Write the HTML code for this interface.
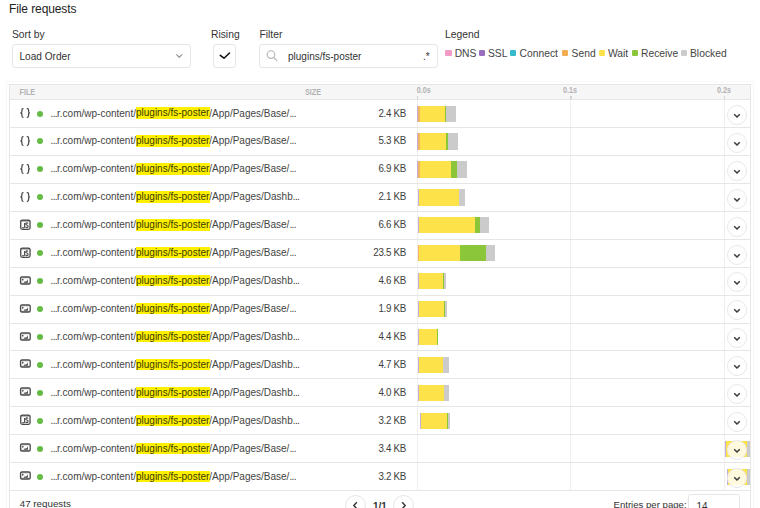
<!DOCTYPE html>
<html><head><meta charset="utf-8">
<style>
*{box-sizing:border-box;margin:0;padding:0}
html,body{width:760px;height:508px;overflow:hidden;background:#fff}
body{position:relative;font-family:"Liberation Sans",sans-serif;color:#333}
.abs{position:absolute;white-space:nowrap}
.title{left:9px;top:0.6px;font-size:12px;line-height:16px;color:#222;letter-spacing:-0.1px}
.lbl{font-size:10.3px;line-height:14px;color:#333}
.box{position:absolute;border:1px solid #e6e6e6;border-radius:3px;background:#fff}
.table{position:absolute;left:9px;top:84px;width:742px;height:430px;border:1px solid #e6e6e6;background:#fff;outline:1px solid #f8f8f8;outline-offset:2px}
.thead{position:absolute;left:10px;top:85px;width:740px;height:15px;background:#f6f6f6;border-bottom:1px solid #e4e4e4}
.th{position:absolute;font-size:7.2px;line-height:8px;font-weight:bold;color:#b2b2b2;top:86px;transform:scaleY(1.17);transform-origin:0 0}
.tick{position:absolute;width:1px;height:3px;top:96px;background:#d2d2d2}
.vline{position:absolute;top:99px;height:392px;width:1px;background:#efefef}
.row{position:absolute;left:10px;width:740px;height:1px;background:#e6e6e6}
.icw{position:absolute;left:18px;width:15px;height:15px}
.icw svg{display:block}
.br{font-size:10px;line-height:14px;color:#444;letter-spacing:1px}
.dot{position:absolute;left:37px;width:6px;height:6px;border-radius:50%;background:#66bb44}
.url{position:absolute;left:50.5px;font-size:10px;line-height:14px;color:#444;white-space:nowrap}
.el{letter-spacing:-0.6px}
.hl{background:#fff000;color:#3a3a00;padding-top:0.2px;padding-bottom:0.3px;padding-right:0.7px;margin-right:-0.7px}
.size{position:absolute;right:354px;font-size:9.8px;line-height:14px;color:#3d3d3d;white-space:nowrap;letter-spacing:-0.3px;transform:scaleY(1.08);transform-origin:0 10.5px}
.seg{position:absolute;height:16.2px}
.btn{position:absolute;left:726.5px;width:20px;height:20px;padding-top:2px;border-radius:50%;border:1px solid #e8e8e8;background:rgba(255,255,255,.82);display:flex;align-items:center;justify-content:center}
.lsq{position:absolute;top:49.6px;width:6.4px;height:6.4px;border-radius:1.2px}
.ltx{position:absolute;top:46.6px;font-size:10.3px;line-height:14px;color:#444;white-space:nowrap}
.legsq{display:inline-block;width:6px;height:6px;border-radius:1px;margin-right:3px;vertical-align:0px}
.leg{position:absolute;left:445px;top:46.6px;font-size:10.3px;line-height:14px;color:#444;white-space:nowrap}
.leg span.t{margin-right:4px}
.pg{position:absolute;width:21px;height:21px;border-radius:50%;border:1px solid #e4e4e4;background:#fff;display:flex;align-items:center;justify-content:center}
</style></head><body>
<div class="abs title">File requests</div>
<div class="abs lbl" style="left:12px;top:27.7px">Sort by</div>
<div class="abs lbl" style="left:211px;top:27.7px">Rising</div>
<div class="abs lbl" style="left:259.5px;top:27.7px">Filter</div>
<div class="abs lbl" style="left:445px;top:28px">Legend</div>

<div class="box" style="left:12px;top:44px;width:179px;height:24px"></div>
<div class="abs" style="left:19.5px;top:50px;font-size:10.1px;line-height:14px;color:#333">Load Order</div>
<svg class="abs" style="left:175px;top:52px" width="9" height="7" viewBox="0 0 9 7"><path d="M1.3 2.4 L4.25 5.3 L7.2 2.4" fill="none" stroke="#9a9a9a" stroke-width="1.25"/></svg>

<div class="box" style="left:213px;top:44px;width:23px;height:24px"></div>
<svg class="abs" style="left:218px;top:50px" width="14" height="11" viewBox="0 0 14 11"><path d="M2.3 5.3 L6 8.2 L11.5 3" fill="none" stroke="#111" stroke-width="1.55" stroke-linecap="round" stroke-linejoin="round"/></svg>

<div class="box" style="left:259px;top:44px;width:179px;height:24px"></div>
<svg class="abs" style="left:265px;top:49px" width="14" height="13" viewBox="0 0 14 13"><circle cx="6" cy="5.6" r="3.8" fill="none" stroke="#b4b4b4" stroke-width="1.1"/><path d="M8.8 8.4 L12.2 11.8" stroke="#b4b4b4" stroke-width="1.2"/></svg>
<div class="abs" style="left:288px;top:49.8px;font-size:10px;line-height:14px;color:#333">plugins/fs-poster</div>
<div class="abs" style="left:423px;top:49.8px;font-size:10px;line-height:14px;color:#333">.*</div>

<div class="lsq" style="left:445.3px;background:#f29ac6"></div><div class="ltx" style="left:454.7px">DNS</div>
<div class="lsq" style="left:478.5px;background:#9a6fc0"></div><div class="ltx" style="left:488px">SSL</div>
<div class="lsq" style="left:509.5px;background:#35bccb"></div><div class="ltx" style="left:519.6px">Connect</div>
<div class="lsq" style="left:562.1px;background:#f2ad52"></div><div class="ltx" style="left:571.6px">Send</div>
<div class="lsq" style="left:598.8px;background:#fde249"></div><div class="ltx" style="left:607.9px">Wait</div>
<div class="lsq" style="left:632.1px;background:#8bc53a"></div><div class="ltx" style="left:641px">Receive</div>
<div class="lsq" style="left:680.5px;background:#cbcbcb"></div><div class="ltx" style="left:690px">Blocked</div>

<div class="table"></div>
<div class="thead"></div>
<div class="th" style="left:19.5px;top:87.8px">FILE</div>
<div class="th" style="left:305px;top:87.8px">SIZE</div>
<div class="th" style="left:416.8px">0.0s</div>
<div class="th" style="left:563px">0.1s</div>
<div class="th" style="left:717px">0.2s</div>
<div class="tick" style="left:417px"></div>
<div class="tick" style="left:570.3px;width:1.4px"></div>
<div class="tick" style="left:724px"></div>
<div class="vline" style="left:417px"></div>
<div class="vline" style="left:570px"></div>
<div class="vline" style="left:724px"></div>

<div class="row" style="top:99px"></div>
<div class="icw" style="top:106.00px"><svg width="15" height="15" viewBox="0 0 15 15" fill="none" stroke="#4a4a4a" stroke-width="1.25" stroke-linecap="round"><path d="M5 2.7 C3.9 2.7 3.9 3.4 3.9 4.3 L3.9 5.7 C3.9 6.5 3.3 6.9 2.3 6.9 C3.3 6.9 3.9 7.3 3.9 8.1 L3.9 9.6 C3.9 10.5 3.9 11.3 5 11.3"/><path d="M9.2 2.7 C10.3 2.7 10.6 3.4 10.6 4.3 L10.6 5.7 C10.6 6.5 11.1 6.9 11.9 6.9 C11.1 6.9 10.6 7.3 10.6 8.1 L10.6 9.6 C10.6 10.5 10.3 11.3 9.2 11.3"/></svg></div>
<div class="dot" style="top:110.50px"></div>
<div class="url" style="top:106.50px"><span class="el">...</span>r.com/wp-content/<span class="hl">plugins/fs-poster</span>/App/Pages/Base/<span class=el>...</span></div>
<div class="size" style="top:106.50px">2.4 KB</div>
<div class="seg" style="top:105.50px;left:417px;width:39.00px;background:#c3addf"></div>
<div class="seg" style="top:105.50px;left:417.7px;width:38.30px;background:#f3b664"></div>
<div class="seg" style="top:105.50px;left:419.8px;width:36.20px;background:#fde249"></div>
<div class="seg" style="top:105.50px;left:445.3px;width:10.70px;background:#8bc53a"></div>
<div class="seg" style="top:105.50px;left:446.3px;width:9.70px;background:#cbcbcb"></div>
<div class="btn" style="top:104.80px"><svg width="8" height="6" viewBox="0 0 8 6"><path d="M1.2 1.3 L4 4.0 L6.8 1.3" fill="none" stroke="#3a3a3a" stroke-width="1.5"/></svg></div>
<div class="row" style="top:127px"></div>
<div class="icw" style="top:133.94px"><svg width="15" height="15" viewBox="0 0 15 15" fill="none" stroke="#4a4a4a" stroke-width="1.25" stroke-linecap="round"><path d="M5 2.7 C3.9 2.7 3.9 3.4 3.9 4.3 L3.9 5.7 C3.9 6.5 3.3 6.9 2.3 6.9 C3.3 6.9 3.9 7.3 3.9 8.1 L3.9 9.6 C3.9 10.5 3.9 11.3 5 11.3"/><path d="M9.2 2.7 C10.3 2.7 10.6 3.4 10.6 4.3 L10.6 5.7 C10.6 6.5 11.1 6.9 11.9 6.9 C11.1 6.9 10.6 7.3 10.6 8.1 L10.6 9.6 C10.6 10.5 10.3 11.3 9.2 11.3"/></svg></div>
<div class="dot" style="top:138.44px"></div>
<div class="url" style="top:134.44px"><span class="el">...</span>r.com/wp-content/<span class="hl">plugins/fs-poster</span>/App/Pages/Base/<span class=el>...</span></div>
<div class="size" style="top:134.44px">5.3 KB</div>
<div class="seg" style="top:133.44px;left:417px;width:41.00px;background:#c3addf"></div>
<div class="seg" style="top:133.44px;left:417.7px;width:40.30px;background:#f3b664"></div>
<div class="seg" style="top:133.44px;left:419.8px;width:38.20px;background:#fde249"></div>
<div class="seg" style="top:133.44px;left:446px;width:12.00px;background:#8bc53a"></div>
<div class="seg" style="top:133.44px;left:447.9px;width:10.10px;background:#cbcbcb"></div>
<div class="btn" style="top:132.74px"><svg width="8" height="6" viewBox="0 0 8 6"><path d="M1.2 1.3 L4 4.0 L6.8 1.3" fill="none" stroke="#3a3a3a" stroke-width="1.5"/></svg></div>
<div class="row" style="top:155px"></div>
<div class="icw" style="top:161.88px"><svg width="15" height="15" viewBox="0 0 15 15" fill="none" stroke="#4a4a4a" stroke-width="1.25" stroke-linecap="round"><path d="M5 2.7 C3.9 2.7 3.9 3.4 3.9 4.3 L3.9 5.7 C3.9 6.5 3.3 6.9 2.3 6.9 C3.3 6.9 3.9 7.3 3.9 8.1 L3.9 9.6 C3.9 10.5 3.9 11.3 5 11.3"/><path d="M9.2 2.7 C10.3 2.7 10.6 3.4 10.6 4.3 L10.6 5.7 C10.6 6.5 11.1 6.9 11.9 6.9 C11.1 6.9 10.6 7.3 10.6 8.1 L10.6 9.6 C10.6 10.5 10.3 11.3 9.2 11.3"/></svg></div>
<div class="dot" style="top:166.38px"></div>
<div class="url" style="top:162.38px"><span class="el">...</span>r.com/wp-content/<span class="hl">plugins/fs-poster</span>/App/Pages/Base/<span class=el>...</span></div>
<div class="size" style="top:162.38px">6.9 KB</div>
<div class="seg" style="top:161.38px;left:417px;width:50.00px;background:#c3addf"></div>
<div class="seg" style="top:161.38px;left:417.7px;width:49.30px;background:#f3b664"></div>
<div class="seg" style="top:161.38px;left:419.8px;width:47.20px;background:#fde249"></div>
<div class="seg" style="top:161.38px;left:451.4px;width:15.60px;background:#8bc53a"></div>
<div class="seg" style="top:161.38px;left:457px;width:10.00px;background:#cbcbcb"></div>
<div class="btn" style="top:160.68px"><svg width="8" height="6" viewBox="0 0 8 6"><path d="M1.2 1.3 L4 4.0 L6.8 1.3" fill="none" stroke="#3a3a3a" stroke-width="1.5"/></svg></div>
<div class="row" style="top:183px"></div>
<div class="icw" style="top:189.82px"><svg width="15" height="15" viewBox="0 0 15 15" fill="none" stroke="#4a4a4a" stroke-width="1.25" stroke-linecap="round"><path d="M5 2.7 C3.9 2.7 3.9 3.4 3.9 4.3 L3.9 5.7 C3.9 6.5 3.3 6.9 2.3 6.9 C3.3 6.9 3.9 7.3 3.9 8.1 L3.9 9.6 C3.9 10.5 3.9 11.3 5 11.3"/><path d="M9.2 2.7 C10.3 2.7 10.6 3.4 10.6 4.3 L10.6 5.7 C10.6 6.5 11.1 6.9 11.9 6.9 C11.1 6.9 10.6 7.3 10.6 8.1 L10.6 9.6 C10.6 10.5 10.3 11.3 9.2 11.3"/></svg></div>
<div class="dot" style="top:194.32px"></div>
<div class="url" style="top:190.32px"><span class="el">...</span>r.com/wp-content/<span class="hl">plugins/fs-poster</span>/App/Pages/Dashb<span class=el>...</span></div>
<div class="size" style="top:190.32px">2.1 KB</div>
<div class="seg" style="top:189.32px;left:417.6px;width:47.40px;background:#c3addf"></div>
<div class="seg" style="top:189.32px;left:418.6px;width:46.40px;background:#fde249"></div>
<div class="seg" style="top:189.32px;left:458.5px;width:6.50px;background:#8bc53a"></div>
<div class="seg" style="top:189.32px;left:459px;width:6.00px;background:#cbcbcb"></div>
<div class="btn" style="top:188.62px"><svg width="8" height="6" viewBox="0 0 8 6"><path d="M1.2 1.3 L4 4.0 L6.8 1.3" fill="none" stroke="#3a3a3a" stroke-width="1.5"/></svg></div>
<div class="row" style="top:211px"></div>
<div class="icw" style="top:217.76px"><svg width="15" height="15" viewBox="0 0 15 15" fill="none" stroke="#4a4a4a"><rect x="2.72" y="2.09" width="9.33" height="9.2" rx="1.5" stroke-width="1.3"/><path d="M2.8 2.9 H12" stroke-width="1"/><path d="M6.6 5.0 L6.6 8.5 C6.6 9.5 6.1 9.9 5.3 9.9 C4.8 9.9 4.5 9.7 4.3 9.4" stroke-width="1.1"/><path d="M10 5.5 C9.8 5.0 9.4 4.9 8.9 4.9 C8.2 4.9 7.7 5.2 7.7 5.9 C7.7 6.5 8.2 6.8 8.9 7.0 C9.6 7.2 10.1 7.5 10.1 8.3 C10.1 9.1 9.5 9.6 8.8 9.6 C8.2 9.6 7.7 9.3 7.5 8.8" stroke-width="1.15"/></svg></div>
<div class="dot" style="top:222.26px"></div>
<div class="url" style="top:218.26px"><span class="el">...</span>r.com/wp-content/<span class="hl">plugins/fs-poster</span>/App/Pages/Base/<span class=el>...</span></div>
<div class="size" style="top:218.26px">6.6 KB</div>
<div class="seg" style="top:217.26px;left:417.6px;width:71.40px;background:#c3addf"></div>
<div class="seg" style="top:217.26px;left:418.6px;width:70.40px;background:#fde249"></div>
<div class="seg" style="top:217.26px;left:475px;width:14.00px;background:#8bc53a"></div>
<div class="seg" style="top:217.26px;left:479.8px;width:9.20px;background:#cbcbcb"></div>
<div class="btn" style="top:216.56px"><svg width="8" height="6" viewBox="0 0 8 6"><path d="M1.2 1.3 L4 4.0 L6.8 1.3" fill="none" stroke="#3a3a3a" stroke-width="1.5"/></svg></div>
<div class="row" style="top:239px"></div>
<div class="icw" style="top:245.70px"><svg width="15" height="15" viewBox="0 0 15 15" fill="none" stroke="#4a4a4a"><rect x="2.72" y="2.09" width="9.33" height="9.2" rx="1.5" stroke-width="1.3"/><path d="M2.8 2.9 H12" stroke-width="1"/><path d="M6.6 5.0 L6.6 8.5 C6.6 9.5 6.1 9.9 5.3 9.9 C4.8 9.9 4.5 9.7 4.3 9.4" stroke-width="1.1"/><path d="M10 5.5 C9.8 5.0 9.4 4.9 8.9 4.9 C8.2 4.9 7.7 5.2 7.7 5.9 C7.7 6.5 8.2 6.8 8.9 7.0 C9.6 7.2 10.1 7.5 10.1 8.3 C10.1 9.1 9.5 9.6 8.8 9.6 C8.2 9.6 7.7 9.3 7.5 8.8" stroke-width="1.15"/></svg></div>
<div class="dot" style="top:250.20px"></div>
<div class="url" style="top:246.20px"><span class="el">...</span>r.com/wp-content/<span class="hl">plugins/fs-poster</span>/App/Pages/Base/<span class=el>...</span></div>
<div class="size" style="top:246.20px">23.5 KB</div>
<div class="seg" style="top:245.20px;left:417.6px;width:77.40px;background:#c3addf"></div>
<div class="seg" style="top:245.20px;left:418.4px;width:76.60px;background:#f3b664"></div>
<div class="seg" style="top:245.20px;left:419.4px;width:75.60px;background:#fde249"></div>
<div class="seg" style="top:245.20px;left:460.4px;width:34.60px;background:#8bc53a"></div>
<div class="seg" style="top:245.20px;left:485.6px;width:9.40px;background:#cbcbcb"></div>
<div class="btn" style="top:244.50px"><svg width="8" height="6" viewBox="0 0 8 6"><path d="M1.2 1.3 L4 4.0 L6.8 1.3" fill="none" stroke="#3a3a3a" stroke-width="1.5"/></svg></div>
<div class="row" style="top:267px"></div>
<div class="icw" style="top:273.64px"><svg width="15" height="15" viewBox="0 0 15 15" stroke="#4a4a4a"><rect x="2.55" y="2.95" width="9.65" height="7.15" rx="1.4" stroke-width="1.3" fill="none"/><path d="M2.8 3.7 H12 M2.8 9.4 H12" stroke-width="0.7"/><circle cx="4.7" cy="5.7" r="0.9" fill="#4a4a4a" stroke="none"/><path d="M4.4 6.2 L3.4 8.8" stroke-width="0.5" stroke="#999"/><path d="M5.6 8.7 L6.4 7.5 L8.0 7.6 L9.3 6.6 L9.5 5.4 L9.9 5.4 L9.9 8.7 Z" fill="#4a4a4a" stroke="none"/></svg></div>
<div class="dot" style="top:278.14px"></div>
<div class="url" style="top:274.14px"><span class="el">...</span>r.com/wp-content/<span class="hl">plugins/fs-poster</span>/App/Pages/Dashb<span class=el>...</span></div>
<div class="size" style="top:274.14px">4.6 KB</div>
<div class="seg" style="top:273.14px;left:417.8px;width:28.20px;background:#c3addf"></div>
<div class="seg" style="top:273.14px;left:418.8px;width:27.20px;background:#fde249"></div>
<div class="seg" style="top:273.14px;left:442.7px;width:3.30px;background:#8bc53a"></div>
<div class="seg" style="top:273.14px;left:443.5px;width:2.50px;background:#cbcbcb"></div>
<div class="btn" style="top:272.44px"><svg width="8" height="6" viewBox="0 0 8 6"><path d="M1.2 1.3 L4 4.0 L6.8 1.3" fill="none" stroke="#3a3a3a" stroke-width="1.5"/></svg></div>
<div class="row" style="top:295px"></div>
<div class="icw" style="top:301.58px"><svg width="15" height="15" viewBox="0 0 15 15" stroke="#4a4a4a"><rect x="2.55" y="2.95" width="9.65" height="7.15" rx="1.4" stroke-width="1.3" fill="none"/><path d="M2.8 3.7 H12 M2.8 9.4 H12" stroke-width="0.7"/><circle cx="4.7" cy="5.7" r="0.9" fill="#4a4a4a" stroke="none"/><path d="M4.4 6.2 L3.4 8.8" stroke-width="0.5" stroke="#999"/><path d="M5.6 8.7 L6.4 7.5 L8.0 7.6 L9.3 6.6 L9.5 5.4 L9.9 5.4 L9.9 8.7 Z" fill="#4a4a4a" stroke="none"/></svg></div>
<div class="dot" style="top:306.08px"></div>
<div class="url" style="top:302.08px"><span class="el">...</span>r.com/wp-content/<span class="hl">plugins/fs-poster</span>/App/Pages/Base/<span class=el>...</span></div>
<div class="size" style="top:302.08px">1.9 KB</div>
<div class="seg" style="top:301.08px;left:417.8px;width:29.20px;background:#c3addf"></div>
<div class="seg" style="top:301.08px;left:418.8px;width:28.20px;background:#fde249"></div>
<div class="seg" style="top:301.08px;left:444.3px;width:2.70px;background:#8bc53a"></div>
<div class="seg" style="top:301.08px;left:445px;width:2.00px;background:#cbcbcb"></div>
<div class="btn" style="top:300.38px"><svg width="8" height="6" viewBox="0 0 8 6"><path d="M1.2 1.3 L4 4.0 L6.8 1.3" fill="none" stroke="#3a3a3a" stroke-width="1.5"/></svg></div>
<div class="row" style="top:323px"></div>
<div class="icw" style="top:329.52px"><svg width="15" height="15" viewBox="0 0 15 15" stroke="#4a4a4a"><rect x="2.55" y="2.95" width="9.65" height="7.15" rx="1.4" stroke-width="1.3" fill="none"/><path d="M2.8 3.7 H12 M2.8 9.4 H12" stroke-width="0.7"/><circle cx="4.7" cy="5.7" r="0.9" fill="#4a4a4a" stroke="none"/><path d="M4.4 6.2 L3.4 8.8" stroke-width="0.5" stroke="#999"/><path d="M5.6 8.7 L6.4 7.5 L8.0 7.6 L9.3 6.6 L9.5 5.4 L9.9 5.4 L9.9 8.7 Z" fill="#4a4a4a" stroke="none"/></svg></div>
<div class="dot" style="top:334.02px"></div>
<div class="url" style="top:330.02px"><span class="el">...</span>r.com/wp-content/<span class="hl">plugins/fs-poster</span>/App/Pages/Dashb<span class=el>...</span></div>
<div class="size" style="top:330.02px">4.4 KB</div>
<div class="seg" style="top:329.02px;left:417.8px;width:20.20px;background:#c3addf"></div>
<div class="seg" style="top:329.02px;left:418.8px;width:19.20px;background:#fde249"></div>
<div class="seg" style="top:329.02px;left:437.4px;width:0.60px;background:#8bc53a"></div>
<div class="btn" style="top:328.32px"><svg width="8" height="6" viewBox="0 0 8 6"><path d="M1.2 1.3 L4 4.0 L6.8 1.3" fill="none" stroke="#3a3a3a" stroke-width="1.5"/></svg></div>
<div class="row" style="top:350px"></div>
<div class="icw" style="top:357.46px"><svg width="15" height="15" viewBox="0 0 15 15" stroke="#4a4a4a"><rect x="2.55" y="2.95" width="9.65" height="7.15" rx="1.4" stroke-width="1.3" fill="none"/><path d="M2.8 3.7 H12 M2.8 9.4 H12" stroke-width="0.7"/><circle cx="4.7" cy="5.7" r="0.9" fill="#4a4a4a" stroke="none"/><path d="M4.4 6.2 L3.4 8.8" stroke-width="0.5" stroke="#999"/><path d="M5.6 8.7 L6.4 7.5 L8.0 7.6 L9.3 6.6 L9.5 5.4 L9.9 5.4 L9.9 8.7 Z" fill="#4a4a4a" stroke="none"/></svg></div>
<div class="dot" style="top:361.96px"></div>
<div class="url" style="top:357.96px"><span class="el">...</span>r.com/wp-content/<span class="hl">plugins/fs-poster</span>/App/Pages/Dashb<span class=el>...</span></div>
<div class="size" style="top:357.96px">4.7 KB</div>
<div class="seg" style="top:356.96px;left:417.8px;width:31.20px;background:#c3addf"></div>
<div class="seg" style="top:356.96px;left:418.8px;width:30.20px;background:#fde249"></div>
<div class="seg" style="top:356.96px;left:442.8px;width:6.20px;background:#8bc53a"></div>
<div class="seg" style="top:356.96px;left:443.4px;width:5.60px;background:#cbcbcb"></div>
<div class="btn" style="top:356.26px"><svg width="8" height="6" viewBox="0 0 8 6"><path d="M1.2 1.3 L4 4.0 L6.8 1.3" fill="none" stroke="#3a3a3a" stroke-width="1.5"/></svg></div>
<div class="row" style="top:378px"></div>
<div class="icw" style="top:385.40px"><svg width="15" height="15" viewBox="0 0 15 15" stroke="#4a4a4a"><rect x="2.55" y="2.95" width="9.65" height="7.15" rx="1.4" stroke-width="1.3" fill="none"/><path d="M2.8 3.7 H12 M2.8 9.4 H12" stroke-width="0.7"/><circle cx="4.7" cy="5.7" r="0.9" fill="#4a4a4a" stroke="none"/><path d="M4.4 6.2 L3.4 8.8" stroke-width="0.5" stroke="#999"/><path d="M5.6 8.7 L6.4 7.5 L8.0 7.6 L9.3 6.6 L9.5 5.4 L9.9 5.4 L9.9 8.7 Z" fill="#4a4a4a" stroke="none"/></svg></div>
<div class="dot" style="top:389.90px"></div>
<div class="url" style="top:385.90px"><span class="el">...</span>r.com/wp-content/<span class="hl">plugins/fs-poster</span>/App/Pages/Dashb<span class=el>...</span></div>
<div class="size" style="top:385.90px">4.0 KB</div>
<div class="seg" style="top:384.90px;left:417.8px;width:31.20px;background:#c3addf"></div>
<div class="seg" style="top:384.90px;left:418.8px;width:30.20px;background:#fde249"></div>
<div class="seg" style="top:384.90px;left:444.1px;width:4.90px;background:#cbcbcb"></div>
<div class="btn" style="top:384.20px"><svg width="8" height="6" viewBox="0 0 8 6"><path d="M1.2 1.3 L4 4.0 L6.8 1.3" fill="none" stroke="#3a3a3a" stroke-width="1.5"/></svg></div>
<div class="row" style="top:406px"></div>
<div class="icw" style="top:413.34px"><svg width="15" height="15" viewBox="0 0 15 15" fill="none" stroke="#4a4a4a"><rect x="2.72" y="2.09" width="9.33" height="9.2" rx="1.5" stroke-width="1.3"/><path d="M2.8 2.9 H12" stroke-width="1"/><path d="M6.6 5.0 L6.6 8.5 C6.6 9.5 6.1 9.9 5.3 9.9 C4.8 9.9 4.5 9.7 4.3 9.4" stroke-width="1.1"/><path d="M10 5.5 C9.8 5.0 9.4 4.9 8.9 4.9 C8.2 4.9 7.7 5.2 7.7 5.9 C7.7 6.5 8.2 6.8 8.9 7.0 C9.6 7.2 10.1 7.5 10.1 8.3 C10.1 9.1 9.5 9.6 8.8 9.6 C8.2 9.6 7.7 9.3 7.5 8.8" stroke-width="1.15"/></svg></div>
<div class="dot" style="top:417.84px"></div>
<div class="url" style="top:413.84px"><span class="el">...</span>r.com/wp-content/<span class="hl">plugins/fs-poster</span>/App/Pages/Dashb<span class=el>...</span></div>
<div class="size" style="top:413.84px">3.2 KB</div>
<div class="seg" style="top:412.84px;left:419.8px;width:30.20px;background:#c3addf"></div>
<div class="seg" style="top:412.84px;left:420.8px;width:29.20px;background:#fde249"></div>
<div class="seg" style="top:412.84px;left:446.6px;width:3.40px;background:#8bc53a"></div>
<div class="seg" style="top:412.84px;left:447.5px;width:2.50px;background:#cbcbcb"></div>
<div class="btn" style="top:412.14px"><svg width="8" height="6" viewBox="0 0 8 6"><path d="M1.2 1.3 L4 4.0 L6.8 1.3" fill="none" stroke="#3a3a3a" stroke-width="1.5"/></svg></div>
<div class="row" style="top:434px"></div>
<div class="icw" style="top:441.28px"><svg width="15" height="15" viewBox="0 0 15 15" stroke="#4a4a4a"><rect x="2.55" y="2.95" width="9.65" height="7.15" rx="1.4" stroke-width="1.3" fill="none"/><path d="M2.8 3.7 H12 M2.8 9.4 H12" stroke-width="0.7"/><circle cx="4.7" cy="5.7" r="0.9" fill="#4a4a4a" stroke="none"/><path d="M4.4 6.2 L3.4 8.8" stroke-width="0.5" stroke="#999"/><path d="M5.6 8.7 L6.4 7.5 L8.0 7.6 L9.3 6.6 L9.5 5.4 L9.9 5.4 L9.9 8.7 Z" fill="#4a4a4a" stroke="none"/></svg></div>
<div class="dot" style="top:445.78px"></div>
<div class="url" style="top:441.78px"><span class="el">...</span>r.com/wp-content/<span class="hl">plugins/fs-poster</span>/App/Pages/Base/<span class=el>...</span></div>
<div class="size" style="top:441.78px">3.4 KB</div>
<div class="seg" style="top:440.78px;left:725.2px;width:24.80px;background:#c3addf"></div>
<div class="seg" style="top:440.78px;left:726px;width:24.00px;background:#fde249"></div>
<div class="seg" style="top:440.78px;left:747px;width:3.00px;background:#cbcbcb"></div>
<div class="btn" style="top:440.08px"><svg width="8" height="6" viewBox="0 0 8 6"><path d="M1.2 1.3 L4 4.0 L6.8 1.3" fill="none" stroke="#3a3a3a" stroke-width="1.5"/></svg></div>
<div class="row" style="top:462px"></div>
<div class="icw" style="top:469.22px"><svg width="15" height="15" viewBox="0 0 15 15" stroke="#4a4a4a"><rect x="2.55" y="2.95" width="9.65" height="7.15" rx="1.4" stroke-width="1.3" fill="none"/><path d="M2.8 3.7 H12 M2.8 9.4 H12" stroke-width="0.7"/><circle cx="4.7" cy="5.7" r="0.9" fill="#4a4a4a" stroke="none"/><path d="M4.4 6.2 L3.4 8.8" stroke-width="0.5" stroke="#999"/><path d="M5.6 8.7 L6.4 7.5 L8.0 7.6 L9.3 6.6 L9.5 5.4 L9.9 5.4 L9.9 8.7 Z" fill="#4a4a4a" stroke="none"/></svg></div>
<div class="dot" style="top:473.72px"></div>
<div class="url" style="top:469.72px"><span class="el">...</span>r.com/wp-content/<span class="hl">plugins/fs-poster</span>/App/Pages/Base/<span class=el>...</span></div>
<div class="size" style="top:469.72px">3.2 KB</div>
<div class="seg" style="top:468.72px;left:726.9px;width:23.10px;background:#c3addf"></div>
<div class="seg" style="top:468.72px;left:727.7px;width:22.30px;background:#fde249"></div>
<div class="seg" style="top:468.72px;left:747px;width:3.00px;background:#cbcbcb"></div>
<div class="btn" style="top:468.02px"><svg width="8" height="6" viewBox="0 0 8 6"><path d="M1.2 1.3 L4 4.0 L6.8 1.3" fill="none" stroke="#3a3a3a" stroke-width="1.5"/></svg></div>
<div class="row" style="top:490px"></div>

<div class="abs" style="left:19.7px;top:497px;font-size:9.8px;line-height:14px;color:#333">47 requests</div>
<div class="pg" style="left:345px;top:495px"><svg width="7" height="9" viewBox="0 0 7 9"><path d="M4.8 1.2 L1.8 4.5 L4.8 7.8" fill="none" stroke="#333" stroke-width="1.4"/></svg></div>
<div class="abs" style="left:373px;top:500px;font-size:10px;line-height:14px;font-weight:bold;color:#333">1/1</div>
<div class="pg" style="left:393px;top:495px"><svg width="7" height="9" viewBox="0 0 7 9"><path d="M2.2 1.2 L5.2 4.5 L2.2 7.8" fill="none" stroke="#333" stroke-width="1.4"/></svg></div>
<div class="abs" style="left:613.5px;top:498px;font-size:9.6px;line-height:14px;color:#333">Entries per page:</div>
<div class="box" style="left:688px;top:494px;width:52px;height:24px"></div>
<div class="abs" style="left:696.5px;top:500.4px;font-size:10px;line-height:14px;color:#333">14</div>
</body></html>
